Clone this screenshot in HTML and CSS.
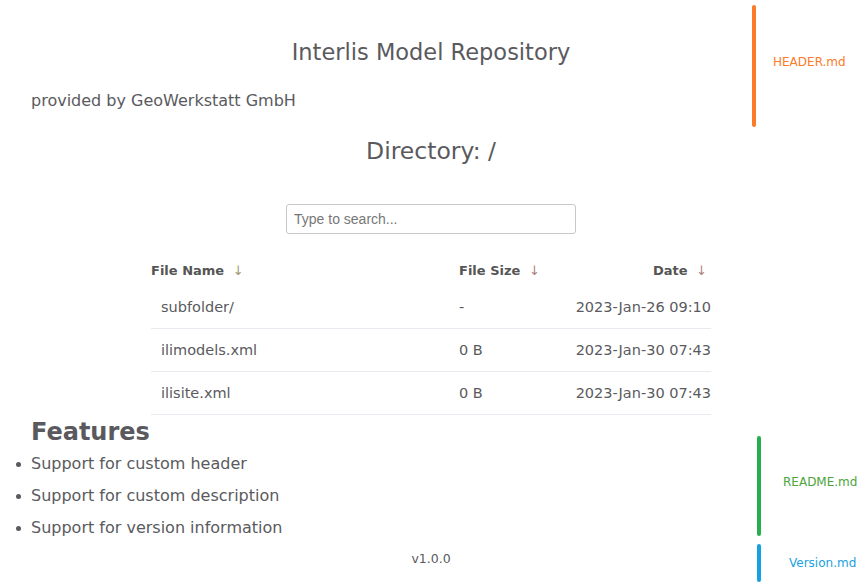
FILE: index.html
```html
<!DOCTYPE html>
<html>
<head>
<meta charset="utf-8">
<link rel="stylesheet" href="styles.css">
</head>
<body>
<main class="page">
  <h1 class="title">Interlis Model Repository</h1>
  <p class="provider">provided by GeoWerkstatt GmbH</p>
  <h2 class="dir">Directory: /</h2>
  <div class="search-wrap"><input class="search" type="text" placeholder="Type to search..."></div>
  <table class="files">
    <colgroup><col class="w-name"><col class="w-size"><col class="w-date"></colgroup>
    <thead>
      <tr>
        <th class="c-name">File Name <span class="arr">↓</span></th>
        <th class="c-size">File Size <span class="arr">↓</span></th>
        <th class="c-date">Date <span class="arr">↓</span></th>
      </tr>
    </thead>
    <tbody>
      <tr><td class="c-name">subfolder/</td><td class="c-size">-</td><td class="c-date">2023-Jan-26 09:10</td></tr>
      <tr><td class="c-name">ilimodels.xml</td><td class="c-size">0 B</td><td class="c-date">2023-Jan-30 07:43</td></tr>
      <tr><td class="c-name">ilisite.xml</td><td class="c-size">0 B</td><td class="c-date">2023-Jan-30 07:43</td></tr>
    </tbody>
  </table>
  <section class="readme">
    <h2 class="feat">Features</h2>
    <ul class="list">
      <li>Support for custom header</li>
      <li>Support for custom description</li>
      <li>Support for version information</li>
    </ul>
  </section>
  <div class="version">v1.0.0</div>
</main>
<div class="note note-header"><span class="bar"></span><span class="lbl">HEADER.md</span></div>
<div class="note note-readme"><span class="bar"></span><span class="lbl">README.md</span></div>
<div class="note note-version"><span class="bar"></span><span class="lbl">Version.md</span></div>
</body>
</html>
```
FILE: styles.css
```css
html, body { margin: 0; padding: 0; background: #fff; }
body {
  font-family: "DejaVu Sans", Verdana, sans-serif;
  color: #5a5a5e;
  width: 867px;
  height: 584px;
  overflow: hidden;
  position: relative;
}
.page { width: 862px; padding-top: 37px; }
.title {
  margin: 0;
  font-weight: normal;
  font-size: 22.5px;
  line-height: 30px;
  text-align: center;
}
.provider {
  margin: 24px 0 0 31px;
  font-size: 16px;
  line-height: 20px;
}
.dir {
  margin: 25px 0 0;
  font-weight: normal;
  font-size: 23.5px;
  line-height: 30px;
  text-align: center;
}
.search-wrap { display: flex; justify-content: center; margin-top: 38px; }
.search {
  box-sizing: border-box;
  width: 290px;
  height: 30px;
  border: 1px solid #c8c8c8;
  border-radius: 3px;
  padding: 0 7px;
  font-family: "Liberation Sans", Arial, sans-serif;
  font-size: 14px;
  color: #555;
}
.search::placeholder { color: #777; }
.files {
  margin: 21px auto 0;
  width: 560px;
  table-layout: fixed;
  border-collapse: collapse;
  font-size: 14.5px;
}
.w-name { width: 308px; }
.w-size { width: 110px; }
.w-date { width: 142px; }
.files th {
  height: 31px;
  padding: 0;
  font-size: 13px;
  font-weight: bold;
  color: #555;
  vertical-align: top;
  padding-top: 8px;
  box-sizing: border-box;
  white-space: nowrap;
}
.files td {
  height: 42px;
  padding: 0 10px;
  border-bottom: 1px solid #e8ebef;
  vertical-align: middle;
  color: #5a5a5e;
  white-space: nowrap;
}
.files th.c-name { text-align: left; }
.files th.c-size { text-align: left; }
.files th.c-date { text-align: right; padding-right: 4px; }
.files td.c-size { padding-left: 0; }
.files td.c-date { text-align: right; padding: 0; }
.arr { color: #b08080; font-weight: normal; margin-left: 4px; }
.c-name .arr { color: #9a9a70; }
.readme { margin-left: 31px; padding-top: 1px; }
.feat {
  margin: 0;
  font-size: 24px;
  font-weight: bold;
  line-height: 32px;
}
.list {
  margin: 0;
  padding: 0;
  font-size: 16px;
  line-height: 32px;
  list-style: none;
}
.list li { position: relative; }
.list li::before {
  content: "";
  position: absolute;
  left: -15px;
  top: 14px;
  width: 5px;
  height: 5px;
  border-radius: 50%;
  background: #5a5a5e;
}
.version {
  margin-top: 5px;
  text-align: center;
  font-size: 12.5px;
  line-height: 20px;
}
.note { position: absolute; display: flex; align-items: center; }
.bar { width: 4px; border-radius: 2px; align-self: stretch; }
.lbl { font-size: 12px; margin-bottom: 9px; }
.note-header { left: 752px; top: 5px; height: 122px; }
.note-header .bar { background: #fc7b2a; }
.note-header .lbl { color: #fc7b2a; margin-left: 17px; }
.note-readme { left: 757px; top: 436px; height: 100px; }
.note-readme .bar { background: #27ae4f; }
.note-readme .lbl { color: #4ba63a; margin-left: 22px; }
.note-version { left: 757px; top: 544px; height: 38px; }
.note-version .bar { background: #14a0e2; }
.note-version .lbl { color: #1b9fe0; margin-left: 28px; margin-bottom: 0; }
```
